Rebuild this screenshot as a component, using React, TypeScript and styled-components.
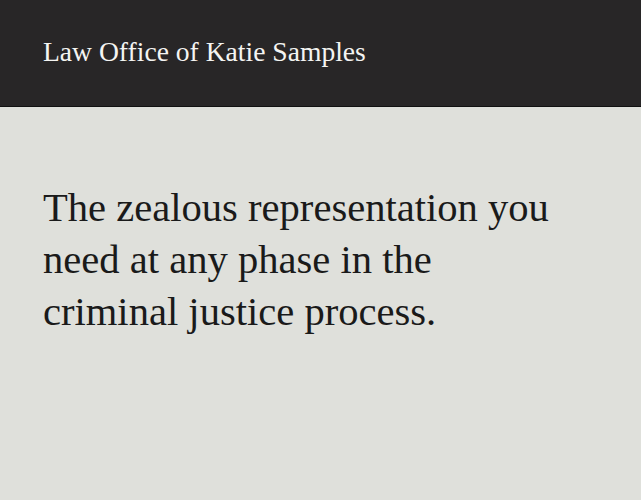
import styled, { createGlobalStyle } from 'styled-components'

const GlobalStyle = createGlobalStyle`
  html, body {
    margin: 0;
    padding: 0;
    background: #dfe0db;
  }
  body {
    font-family: 'Liberation Serif', 'Times New Roman', serif;
  }
`

const Page = styled.div`
  min-height: 500px;
  background: #dfe0db;
`

const Header = styled.header`
  height: 106px;
  background: #282627;
  border-bottom: 1px solid #111;
  display: flex;
  align-items: center;
  padding: 0 43px;
`

const SiteTitle = styled.div`
  font-size: 27.6px;
  color: #f4f4f2;
  padding-bottom: 2px;
`

const Hero = styled.section`
  padding: 75px 43px 0;
`

const Tagline = styled.h1`
  margin: 0;
  max-width: 516px;
  font-weight: 400;
  font-size: 40.6px;
  line-height: 52px;
  color: #1a1a1a;
`

export default function App() {
  return (
    <Page>
      <GlobalStyle />
      <Header>
        <SiteTitle>Law Office of Katie Samples</SiteTitle>
      </Header>
      <Hero>
        <Tagline>The zealous representation you need at any phase in the criminal justice process.</Tagline>
      </Hero>
    </Page>
  )
}
